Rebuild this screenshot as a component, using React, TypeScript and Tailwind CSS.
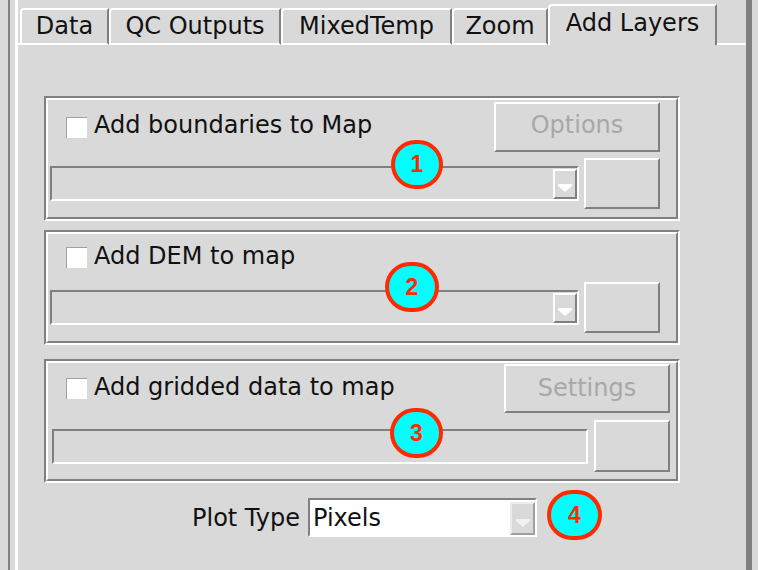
import React from "react";

// Motif-style "Add Layers" panel with numbered callouts
const raised =
  "border-2 border-t-white border-l-white border-r-[#808080] border-b-[#808080]";
const sunken =
  "border-2 border-t-[#808080] border-l-[#808080] border-r-white border-b-white";

function Tab({ label, width }: { label: string; width: string }) {
  return (
    <div
      className={`${width} h-[37px] border-2 border-t-white border-l-white border-r-[#808080] border-b-white rounded-tl-[4px] flex justify-center text-[24px] leading-[33px]`}
    >
      {label}
    </div>
  );
}

function Arrow({ light }: { light?: boolean }) {
  return (
    <svg width="14" height="8" viewBox="0 0 14 8">
      <path d="M0 0H14V2L7 8L0 2Z" fill={light ? "#f2f2f2" : "#ffffff"} />
    </svg>
  );
}

function Check({ label, top }: { label: string; top: string }) {
  return (
    <div className="flex items-start gap-[7px]">
      <div className={`${top} w-[21px] h-[21px] bg-white border-t border-l border-[#a0a0a0]`} />
      <span className="text-[24px] leading-[28px]">{label}</span>
    </div>
  );
}

function Combo() {
  return (
    <div className={`w-[529px] h-[35px] ${sunken} flex justify-end items-start pt-[1px]`}>
      <div className={`w-[24px] h-[30px] ${raised} flex justify-center items-end pb-[5px]`}>
        <Arrow />
      </div>
    </div>
  );
}

function Etched({ children }: { children: React.ReactNode }) {
  return (
    <div className="ml-[26px] w-[636px] border-2 border-t-[#808080] border-l-[#808080] border-r-white border-b-white">
      <div className="border-2 border-t-white border-l-white border-r-[#808080] border-b-[#808080]">
        {children}
      </div>
    </div>
  );
}

function Badge({ n, pos }: { n: number; pos: string }) {
  return (
    <div
      className={`absolute ${pos} rounded-full bg-[#00ffff] border-[4px] border-[#ff2a00] flex items-center justify-center text-[#ff2a00] font-bold text-[23px] font-['Liberation_Sans',Arial,sans-serif]`}
    >
      {n}
    </div>
  );
}

export default function App() {
  return (
    <div className="relative w-[758px] h-[570px] overflow-hidden bg-[#d9d9d9] text-[#111] font-['DejaVu_Sans',sans-serif] flex">
      <div className="w-[8px]" />
      <div className="w-[2px] bg-[#808080]" />
      <div className="w-[5px]" />
      <div className="w-[3px] bg-white" />

      <div className="w-[728px] flex flex-col">
        {/* tabs */}
        <div className="h-[45px] flex items-end">
          <div className="w-[2px] h-[2px] bg-white" />
          <Tab label="Data" width="w-[89px]" />
          <Tab label="QC Outputs" width="w-[172px]" />
          <Tab label="MixedTemp" width="w-[171px]" />
          <Tab label="Zoom" width="w-[96px]" />
          <div className="w-[169px] h-[41px] border-t-2 border-l-2 border-r-2 border-t-white border-l-white border-r-[#808080] rounded-tl-[4px] flex justify-center pt-[3px] text-[24px] leading-[28px]">
            Add Layers
          </div>
          <div className="flex-1 h-[2px] bg-white" />
        </div>

        {/* boundaries */}
        <div className="mt-[51px]">
          <Etched>
            <div className="pl-[2px] pr-[16px] pb-[8px]">
              <div className="h-[58px] flex justify-between items-start">
                <div className="pl-[16px] pt-[11px]">
                  <Check label="Add boundaries to Map" top="mt-[6px]" />
                </div>
                <div className={`mt-[2px] w-[166px] h-[50px] ${raised} flex items-center justify-center pb-[4px] text-[24px] leading-[28px] text-[#a8a8a8]`}>
                  Options
                </div>
              </div>
              <div className="flex items-center gap-[5px]">
                <Combo />
                <div className={`w-[76px] h-[51px] ${raised}`} />
              </div>
            </div>
          </Etched>
        </div>

        {/* DEM */}
        <div className="mt-[9px]">
          <Etched>
            <div className="pl-[2px] pr-[16px] pb-[8px]">
              <div className="h-[48px] pl-[16px] pt-[8px]">
                <Check label="Add DEM to map" top="mt-[5px]" />
              </div>
              <div className="flex items-center gap-[5px]">
                <Combo />
                <div className={`w-[76px] h-[51px] ${raised}`} />
              </div>
            </div>
          </Etched>
        </div>

        {/* gridded */}
        <div className="mt-[14px]">
          <Etched>
            <div className="pl-[4px] pr-[6px] pb-[7px]">
              <div className="h-[57px] flex justify-between items-start">
                <div className="pl-[14px] pt-[10px]">
                  <Check label="Add gridded data to map" top="mt-[5px]" />
                </div>
                <div className={`mt-[1px] w-[166px] h-[49px] ${raised} flex items-center justify-center pb-[2px] text-[24px] leading-[28px] text-[#a8a8a8]`}>
                  Settings
                </div>
              </div>
              <div className="flex items-center gap-[6px]">
                <div className={`w-[536px] h-[35px] ${sunken}`} />
                <div className={`w-[76px] h-[52px] ${raised}`} />
              </div>
            </div>
          </Etched>
        </div>

        {/* plot type */}
        <div className="mt-[15px] pl-[174px] flex items-center gap-[8px]">
          <span className="text-[24px] leading-[28px]">Plot Type</span>
          <div className={`w-[229px] h-[39px] ${sunken} bg-white flex items-center justify-between`}>
            <span className="pl-[3px] text-[24px] leading-[28px]">Pixels</span>
            <div className="self-start mt-[2px] w-[25px] h-[33px] bg-[#d9d9d9] border-2 border-t-[#ececec] border-l-[#ececec] border-r-[#a0a0a0] border-b-[#a0a0a0] flex justify-center items-end pb-[6px]">
              <Arrow light />
            </div>
          </div>
        </div>
      </div>

      <div className="w-[6px] bg-[#808080]" />

      <Badge n={1} pos="left-[391px] top-[140px] w-[52px] h-[49px]" />
      <Badge n={2} pos="left-[385px] top-[262px] w-[54px] h-[50px]" />
      <Badge n={3} pos="left-[390px] top-[408px] w-[53px] h-[50px]" />
      <Badge n={4} pos="left-[547px] top-[490px] w-[55px] h-[50px]" />
    </div>
  );
}
